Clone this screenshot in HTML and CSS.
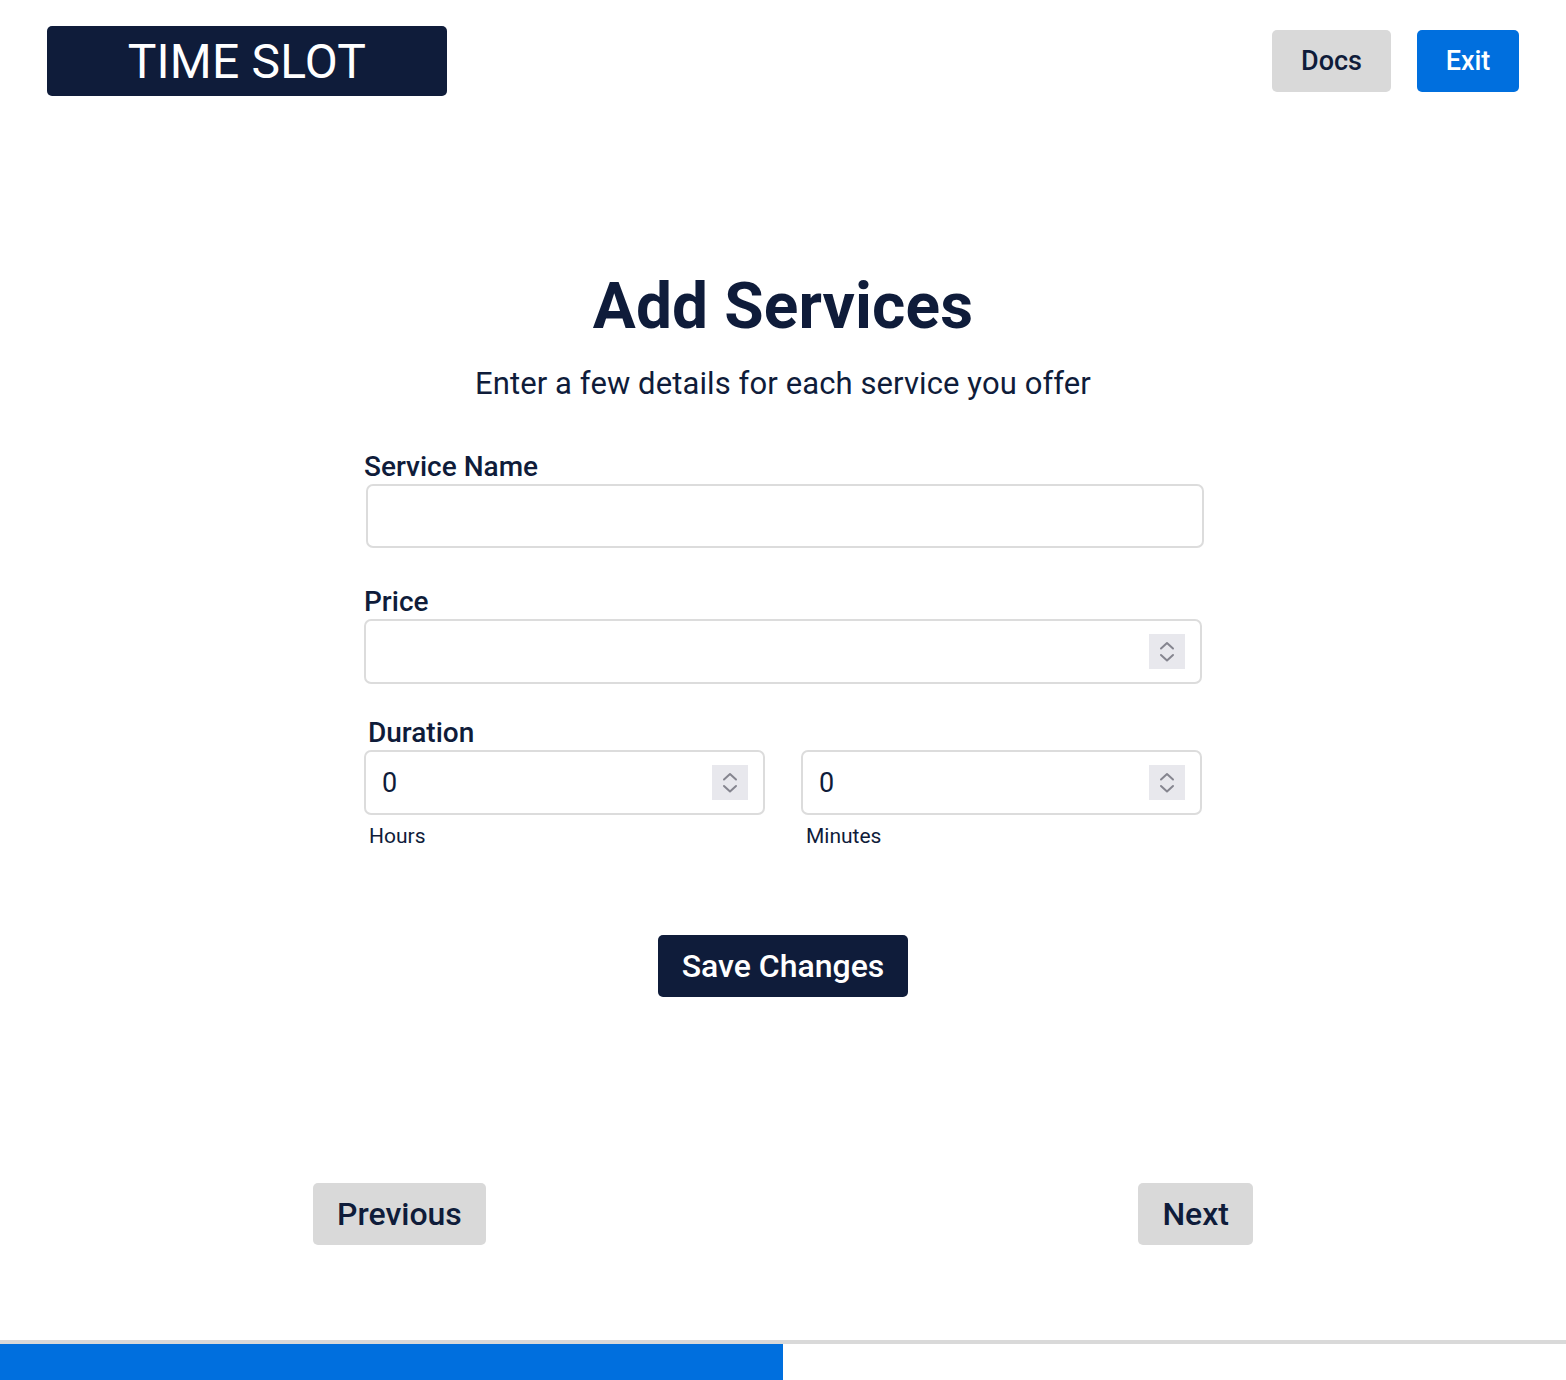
FILE: index.html
```html
<!DOCTYPE html>
<html lang="en">
<head>
<meta charset="utf-8">
<title>Time Slot - Add Services</title>
<link rel="stylesheet" href="styles.css">
</head>
<body>
<header class="topbar">
  <div class="logo">TIME SLOT</div>
  <nav class="top-actions">
    <button class="btn btn-gray btn-docs">Docs</button>
    <button class="btn btn-blue btn-exit">Exit</button>
  </nav>
</header>

<main class="content">
  <h1 class="title">Add Services</h1>
  <p class="subtitle">Enter a few details for each service you offer</p>

  <form class="form">
    <label class="label">Service Name</label>
    <div class="field field-name"><input class="input" type="text"></div>

    <label class="label label-price">Price</label>
    <div class="field">
      <input class="input" type="text">
      <span class="spinner"><svg viewBox="0 0 36 35" width="36" height="35"><path d="M12 14.5 L18 9 L24 14.5" /><path d="M12 21 L18 26.5 L24 21" /></svg></span>
    </div>

    <label class="label label-duration">Duration</label>
    <div class="duration">
      <div class="dur-col">
        <div class="field">
          <input class="input" type="text" value="0">
          <span class="spinner"><svg viewBox="0 0 36 35" width="36" height="35"><path d="M12 14.5 L18 9 L24 14.5" /><path d="M12 21 L18 26.5 L24 21" /></svg></span>
        </div>
        <div class="hint">Hours</div>
      </div>
      <div class="dur-col">
        <div class="field">
          <input class="input" type="text" value="0">
          <span class="spinner"><svg viewBox="0 0 36 35" width="36" height="35"><path d="M12 14.5 L18 9 L24 14.5" /><path d="M12 21 L18 26.5 L24 21" /></svg></span>
        </div>
        <div class="hint">Minutes</div>
      </div>
    </div>

    <div class="save-row"><button type="button" class="btn btn-dark btn-save">Save Changes</button></div>
  </form>

  <div class="pager">
    <button class="btn btn-gray btn-nav">Previous</button>
    <button class="btn btn-gray btn-nav">Next</button>
  </div>
</main>

<div class="progress"><div class="progress-fill" style="width: 50%"></div></div>
</body>
</html>
```

FILE: styles.css
```css
* { box-sizing: border-box; }

html, body {
  margin: 0;
  padding: 0;
  background: #ffffff;
}

body {
  font-family: Roboto, "Liberation Sans", Arial, sans-serif;
  color: #0f1c3a;
  width: 1566px;
  min-height: 1380px;
  display: flex;
  flex-direction: column;
}

.topbar {
  display: flex;
  justify-content: space-between;
  align-items: center;
  padding: 26px 47px 0 47px;
}

.logo {
  width: 400px;
  height: 70px;
  background: #0f1c3a;
  color: #ffffff;
  border-radius: 5px;
  display: flex;
  align-items: center;
  justify-content: center;
  font-size: 48px;
  font-weight: 400;
  letter-spacing: 0.2px;
  padding-top: 1px;
}

.top-actions {
  display: flex;
  gap: 26px;
}

.btn {
  font-family: Roboto, "Liberation Sans", Arial, sans-serif;
  border: none;
  border-radius: 5px;
  height: 62px;
  font-weight: 500;
  cursor: pointer;
  display: inline-flex;
  align-items: center;
  justify-content: center;
  padding: 0;
}

.btn-gray { background: #d9d9d9; color: #0f1c3a; }
.btn-blue { background: #006fde; color: #ffffff; }
.btn-dark { background: #0f1c3a; color: #ffffff; }

.btn-docs { width: 119px; font-size: 27px; }
.btn-exit { width: 102px; font-size: 27px; }

.content {
  display: flex;
  flex-direction: column;
  align-items: center;
}

.title {
  margin: 172px 0 0 0;
  font-size: 64px;
  font-weight: 700;
  line-height: 77px;
  letter-spacing: 0.1px;
}

.subtitle {
  margin: 20px 0 0 0;
  font-size: 31px;
  font-weight: 400;
  line-height: 37px;
  letter-spacing: 0.1px;
}

.form {
  width: 838px;
  margin-top: 48px;
  display: flex;
  flex-direction: column;
}

.label {
  display: block;
  font-size: 28px;
  font-weight: 500;
  line-height: 34px;
}

.label-price { margin-top: 37px; }
.label-duration { margin-top: 32px; padding-left: 4px; }

.field {
  position: relative;
  height: 65px;
  border: 2px solid #dcdcdc;
  border-radius: 7px;
  display: flex;
  align-items: center;
  background: #fff;
}

.field-name { margin: 0 -2px 0 2px; height: 64px; }

.input {
  flex: 1;
  min-width: 0;
  height: 100%;
  border: none;
  outline: none;
  background: transparent;
  font-family: Roboto, "Liberation Sans", Arial, sans-serif;
  font-size: 27px;
  color: #0f1c3a;
  padding: 0 0 0 16px;
}

.spinner {
  width: 36px;
  height: 35px;
  margin-right: 15px;
  background: #e8e8ed;
  display: flex;
}

.spinner svg path {
  fill: none;
  stroke: #85858f;
  stroke-width: 2;
  stroke-linecap: round;
  stroke-linejoin: round;
}

.duration {
  display: grid;
  grid-template-columns: 401px 401px;
  column-gap: 36px;
}

.hint {
  font-size: 21px;
  line-height: 24px;
  margin-top: 9px;
  padding-left: 5px;
}

.save-row {
  display: flex;
  justify-content: center;
  margin-top: 87px;
}

.btn-save {
  width: 250px;
  font-size: 32px;
}

.pager {
  width: 940px;
  display: flex;
  justify-content: space-between;
  margin-top: 186px;
}

.btn-nav { font-size: 32px; padding: 0 24px; }

.progress {
  margin-top: auto;
  height: 40px;
  border-top: 4px solid #d9d9d9;
  width: 100%;
}

.progress-fill {
  height: 100%;
  background: #006fde;
}
```
